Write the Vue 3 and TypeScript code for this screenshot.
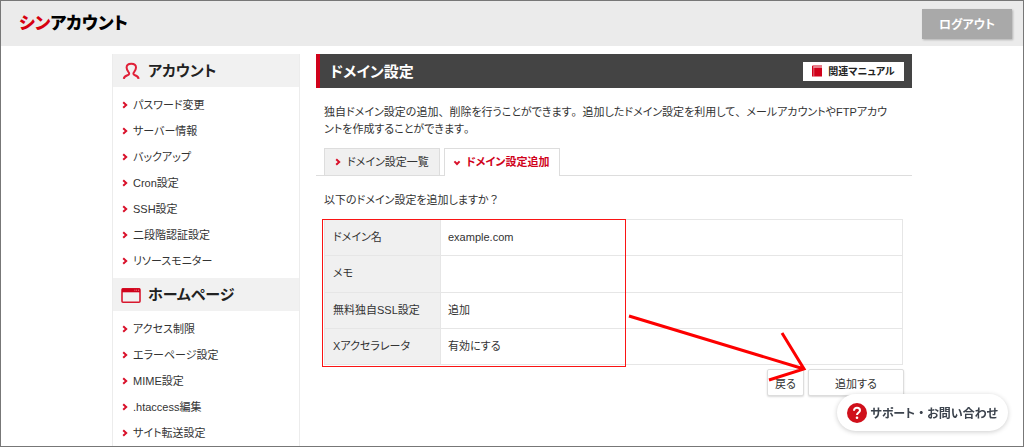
<script setup lang="ts">
interface MenuGroup {
  id: string
  title: string
  items: string[]
}

interface Row {
  label: string
  value: string
}

const groups: MenuGroup[] = [
  {
    id: 'account',
    title: 'アカウント',
    items: ['パスワード変更', 'サーバー情報', 'バックアップ', 'Cron設定', 'SSH設定', '二段階認証設定', 'リソースモニター'],
  },
  {
    id: 'homepage',
    title: 'ホームページ',
    items: ['アクセス制限', 'エラーページ設定', 'MIME設定', '.htaccess編集', 'サイト転送設定'],
  },
]

const rows: Row[] = [
  { label: 'ドメイン名', value: 'example.com' },
  { label: 'メモ', value: '' },
  { label: '無料独自SSL設定', value: '追加' },
  { label: 'Xアクセラレータ', value: '有効にする' },
]
</script>

<template>
  <div class="page">
    <header class="header">
      <a class="logo" href="#"><span class="logo-accent">シン</span>アカウント</a>
      <button class="logout" type="button">ログアウト</button>
    </header>

    <div class="container">
      <nav class="sidebar">
        <section v-for="group in groups" :key="group.id">
          <h2 class="group-title">
            <svg v-if="group.id === 'account'" class="group-icon" viewBox="0 0 20 18" aria-hidden="true">
              <path
                d="M2.8 16.8C3 14.4 4.6 13.9 6.6 13.2C8.6 12.5 8.6 11.3 7.4 9.9C6.3 8.5 5.6 7.2 5.6 5.6C5.6 3.2 7.5 1.8 10.3 1.8S15 3.2 15 5.6C15 7.2 14.3 8.5 13.2 9.9C12 11.3 12 12.5 14 13.2C16 13.9 17.4 14.4 17.6 16.8"
                fill="none" stroke="#e02038" stroke-width="2" />
            </svg>
            <svg v-else class="group-icon" viewBox="0 0 20 18" aria-hidden="true">
              <rect x="1" y="2.7" width="18" height="13.5" rx="1" fill="none" stroke="#d8182f" stroke-width="1.6" />
              <path d="M1 2.5H19V6.3H1Z" fill="#d0021b" />
              <path d="M13.5 4.2H14.3M15.3 4.2H16.1M17.1 4.2H17.9" stroke="#f6b8c0" stroke-width="0.9" />
            </svg>
            {{ group.title }}
          </h2>
          <ul class="menu">
            <li v-for="item in group.items" :key="item">
              <a class="menu-link" href="#">
                <svg class="chevron" viewBox="0 0 6 8" aria-hidden="true"><path d="M1.2 1.2L4.2 4L1.2 6.8" /></svg>
                {{ item }}
              </a>
            </li>
          </ul>
        </section>
      </nav>

      <main class="main">
        <div class="title-bar">
          <h1 class="title">ドメイン設定</h1>
          <a class="manual" href="#">
            <svg class="manual-icon" viewBox="0 0 10 12" aria-hidden="true">
              <path d="M0 1.6V11.5H10V2.4H1.2V1.5H10V0.5H1Q0 0.5 0 1.6Z" fill="#d0021b" />
              <path d="M1.8 2.6V11.5" stroke="#fff" stroke-width="0.4" />
            </svg>
            関連マニュアル
          </a>
        </div>

        <p class="lead">独自ドメイン設定の追加<span class="mark">、</span>削除を行うことができます<span class="mark">。</span>追加したドメイン設定を利用して<span class="mark">、</span>メールアカウントやFTPアカウ<wbr>ントを作成することができます<span class="mark">。</span></p>

        <div class="tabs">
          <a class="tab" href="#">
            <svg class="chevron" viewBox="0 0 6 8" aria-hidden="true"><path d="M1.2 1.2L4.2 4L1.2 6.8" /></svg>
            ドメイン設定一覧
          </a>
          <a class="tab tab-active" href="#" aria-current="page">
            <svg class="chevron-down" viewBox="0 0 8 6" aria-hidden="true"><path d="M1.4 1.4L4 4L6.6 1.4" /></svg>
            ドメイン設定追加
          </a>
        </div>

        <section class="confirm">
          <p class="question">以下のドメイン設定を追加しますか<span class="mark">？</span></p>
          <div class="sheet">
            <table class="table">
              <tbody>
                <tr v-for="row in rows" :key="row.label">
                  <th scope="row">{{ row.label }}</th>
                  <td>{{ row.value }}</td>
                </tr>
              </tbody>
            </table>
            <div class="highlight"></div>
            <svg class="arrow" width="180" height="56" viewBox="0 0 180 56" aria-hidden="true">
              <path d="M2 3L177 56M155 20L177 56L142 67" />
            </svg>
          </div>
          <div class="actions">
            <button class="button" type="button">戻る</button>
            <button class="button button-wide" type="button">追加する</button>
          </div>
        </section>
      </main>
    </div>

    <button class="support" type="button">
      <svg class="support-icon" viewBox="0 0 20 20" aria-hidden="true">
        <circle cx="10" cy="10" r="10" fill="#d0101b" />
        <path d="M7 7.8C7 5.9 8.3 4.8 10 4.8S13 5.9 13 7.5C13 9.4 10 9.6 10 12" fill="none" stroke="#fff" stroke-width="2" />
        <circle cx="10" cy="14.7" r="1.3" fill="#fff" />
      </svg>
      <span>サポート<span class="mark">・</span>お問い合わせ</span>
    </button>
    <div class="frame"></div>
  </div>
</template>

<style>
body {
  margin: 0;
  background: #fff;
}
</style>

<style scoped>
* {
  box-sizing: border-box;
}

.page {
  display: flex;
  flex-direction: column;
  height: 100vh;
  overflow: hidden;
  color: #333;
  font-family: "Liberation Sans", "Noto Sans CJK JP", sans-serif;
  font-size: 11px;
  line-height: 17px;
  font-feature-settings: "palt";
}

/* Punctuation keeps its full-width cell. */
.mark {
  font-feature-settings: normal;
}

button {
  font-family: inherit;
  font-feature-settings: inherit;
  cursor: pointer;
}

a {
  color: inherit;
  text-decoration: none;
}

.header {
  flex: none;
  display: flex;
  align-items: center;
  justify-content: space-between;
  height: 46px;
  padding: 1px 12px 0 19px;
  background: #ebebeb;
}

.logo {
  color: #000;
  font-size: 17px;
  font-weight: 900;
  line-height: 24px;
}

.logo-accent {
  color: #d7000f;
}

.logout {
  width: 90px;
  height: 30px;
  padding: 0;
  border: 0;
  background: #a9a9a9;
  box-shadow: 1px 1px 2px rgba(0, 0, 0, 0.25);
  color: #fff;
  font-size: 12px;
  font-weight: 700;
}

.container {
  flex: 1 0 auto;
  display: flex;
  gap: 16px;
  width: 100%;
  max-width: 800px;
  margin: 0 auto;
  padding-top: 8px;
}

.sidebar {
  flex: none;
  width: 188px;
  border: solid #ececec;
  border-width: 0 1px;
}

.group-title {
  display: flex;
  align-items: center;
  gap: 7px;
  height: 33px;
  margin: 0;
  padding-left: 8px;
  background: #f1f1f1;
  color: #222;
  font-size: 15px;
  font-weight: 700;
}

.group-icon {
  width: 20px;
  height: 18px;
}

.menu {
  margin: 0;
  padding: 5px 0 4px 9px;
  list-style: none;
}

.menu-link {
  display: flex;
  align-items: center;
  gap: 5px;
  height: 26px;
}

.chevron {
  width: 6px;
  height: 8px;
}

.chevron-down {
  width: 8px;
  height: 6px;
}

.chevron path,
.chevron-down path {
  fill: none;
  stroke: #d9112b;
  stroke-width: 2;
}

.main {
  flex: 1;
  min-width: 0;
}

.title-bar {
  display: flex;
  align-items: center;
  justify-content: space-between;
  height: 34px;
  padding: 0 8px 0 10px;
  border-left: 4px solid #d0021b;
  background: #444;
}

.title {
  margin: 0;
  color: #fff;
  font-size: 15px;
  font-weight: 700;
}

.manual {
  display: flex;
  align-items: center;
  justify-content: center;
  gap: 6px;
  width: 101px;
  height: 19px;
  background: #fff;
  color: #222;
  font-size: 10px;
  font-weight: 700;
}

.manual-icon {
  width: 10px;
  height: 12px;
}

.lead {
  margin: 16px 20px 10px 8px;
}

.tabs {
  display: flex;
  gap: 4px;
  padding: 0 8px;
  border-bottom: 1px solid #ddd;
}

.tab {
  display: flex;
  align-items: center;
  gap: 6px;
  width: 116px;
  height: 27px;
  padding-left: 10px;
  border: 1px solid #ddd;
  border-bottom: 0;
  background: #f0f0f0;
}

.tab-active {
  gap: 5px;
  padding-left: 8px;
  margin-bottom: -1px;
  height: 28px;
  background: #fff;
  color: #d0021b;
  font-weight: 700;
}

.confirm {
  padding: 16px 8px 0;
}

.question {
  margin: 0 0 10px;
}

.sheet {
  position: relative;
  margin-right: 1px;
}

.table {
  width: 100%;
  height: 146px;
  border-collapse: collapse;
  table-layout: fixed;
}

.table th,
.table td {
  padding: 0 7px;
  border: 1px solid #e6e6e6;
  font-weight: 400;
  text-align: left;
}

.table th {
  width: 116px;
  padding-left: 8px;
  background: #f0f0f0;
}

.highlight {
  position: absolute;
  top: 0;
  left: -2px;
  width: 304px;
  height: 148px;
  border: 1px solid #fa1414;
}

.arrow {
  position: absolute;
  top: 94px;
  right: 96px;
  overflow: visible;
}

.arrow path {
  fill: none;
  stroke: #fd0000;
  stroke-width: 3;
}

.actions {
  display: flex;
  justify-content: flex-end;
  gap: 4px;
  padding-top: 4px;
}

.button {
  width: 37px;
  height: 27px;
  padding: 0;
  border: 1px solid #ddd;
  border-radius: 2px;
  background: #fff;
  box-shadow: 0 1px 2px rgba(0, 0, 0, 0.15);
  color: #333;
  font-size: 11px;
}

.button-wide {
  width: 96px;
}

.support {
  position: fixed;
  right: 16px;
  bottom: 16px;
  display: flex;
  align-items: center;
  gap: 3px;
  height: 37px;
  padding: 0 10px;
  border: 0;
  border-radius: 19px;
  background: #fff;
  box-shadow: 0 1px 5px rgba(0, 0, 0, 0.2);
  color: #3c434d;
  font-size: 12px;
  font-weight: 700;
}

.support-icon {
  width: 20px;
  height: 20px;
}

.frame {
  position: fixed;
  inset: 0;
  border: 1px solid #777;
  pointer-events: none;
}
</style>
